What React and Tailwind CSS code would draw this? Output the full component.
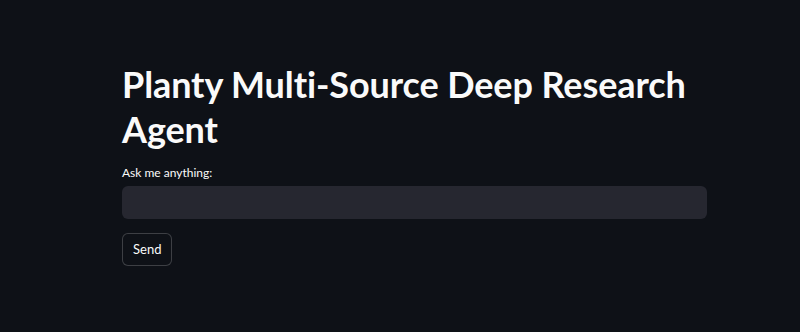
export default function App() {
  return (
    <div className="w-[800px] h-[332px] bg-[#0e1117] text-[#fafafa] overflow-hidden" style={{fontFamily: "Lato, 'Noto Sans', sans-serif"}}>
      <div className="pl-[122px] pr-[93px] pt-[62px] flex flex-col">
        <h1 className="text-[36px] font-bold leading-[45px] tracking-[-0.1px]">Planty Multi-Source Deep Research Agent</h1>
        <label className="mt-[14px] text-[12px] leading-[14px]">Ask me anything:</label>
        <div className="mt-[6px] h-[33px] rounded-[6px] bg-[#262730]"></div>
        <div className="mt-[14px]">
          <button className="h-[33px] px-[10px] rounded-[6px] border border-[rgba(250,250,250,0.2)] bg-[#0e1117] text-[13px]">Send</button>
        </div>
      </div>
    </div>
  );
}
